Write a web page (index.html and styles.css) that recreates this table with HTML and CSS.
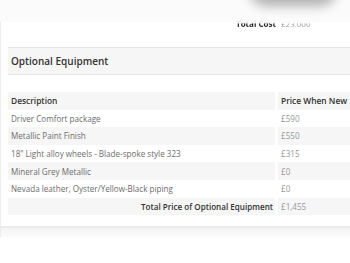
FILE: index.html
```html
<!DOCTYPE html>
<html>
<head>
<meta charset="utf-8">
<link rel="stylesheet" href="styles.css">
</head>
<body>
<div class="top">
  <div class="blob"></div>
  <div class="total-cost"><b>Total Cost</b> <span>£23,000</span></div>
</div>
<div class="card">
  <div class="section-head">Optional Equipment</div>
  <table class="equip">
    <thead>
      <tr><th class="desc">Description</th><th class="price">Price When New</th></tr>
    </thead>
    <tbody>
      <tr><td>Driver Comfort package</td><td class="p">£590</td></tr>
      <tr><td>Metallic Paint Finish</td><td class="p">£550</td></tr>
      <tr><td>18" Light alloy wheels - Blade-spoke style 323</td><td class="p">£315</td></tr>
      <tr><td>Mineral Grey Metallic</td><td class="p">£0</td></tr>
      <tr><td>Nevada leather, Oyster/Yellow-Black piping</td><td class="p">£0</td></tr>
      <tr class="total"><td class="tlabel">Total Price of Optional Equipment</td><td class="p">£1,455</td></tr>
    </tbody>
  </table>
  <div class="card-foot"></div>
</div>
</body>
</html>
```
FILE: styles.css
```css
html, body {
  margin: 0;
  padding: 0;
  background: #fff;
  overflow: hidden;
}
body {
  font-family: "Open Sans", "Liberation Sans", sans-serif;
  width: 350px;
  height: 263px;
}
.top {
  position: relative;
  height: 22px;
  background: #fbfbfb;
}
.blob {
  position: absolute;
  left: 250px;
  top: -34px;
  width: 86px;
  height: 34px;
  border-radius: 24px;
  box-shadow: 0 5px 12px 1px rgba(0,0,0,0.3);
}
.total-cost {
  position: absolute;
  left: 236px;
  top: 18px;
  font-size: 8px;
  line-height: 12px;
  color: #222;
  white-space: nowrap;
  -webkit-mask-image: linear-gradient(to bottom, rgba(0,0,0,0.08) 0%, rgba(0,0,0,0.08) 40%, #000 50%, #000 70%, rgba(0,0,0,0.08) 78%, rgba(0,0,0,0.08) 100%);
  mask-image: linear-gradient(to bottom, rgba(0,0,0,0.08) 0%, rgba(0,0,0,0.08) 40%, #000 50%, #000 70%, rgba(0,0,0,0.08) 78%, rgba(0,0,0,0.08) 100%);
}
.total-cost b { font-weight: 700; }
.total-cost span { color: #999; margin-left: 3px; }
.card {
  border-left: 1px solid #ececec;
  padding-top: 25px;
}
.section-head {
  margin-left: 7px;
  height: 26px;
  line-height: 26px;
  background: #f6f6f6;
  border-top: 1px solid #e4e4e4;
  border-bottom: 1px solid #e4e4e4;
  padding-left: 3px;
  font-size: 10px;
  font-weight: 600;
  color: #333;
}
.equip {
  margin-top: 17px;
  margin-left: 4px;
  border-collapse: separate;
  border-spacing: 3px 0;
  width: 360px;
  font-size: 8.1px;
  color: #6c6c6c;
}
.equip th, .equip td {
  height: 17.6px;
  padding: 0 0 0 3px;
  text-align: left;
  white-space: nowrap;
}
.equip th {
  background: #f6f6f6;
  font-weight: 600;
  font-size: 8.4px;
  color: #333;
}
.equip th.desc { width: 264px; }
.equip tbody tr:nth-child(even) td { background: #f6f6f6; }
.equip td.p { color: #999; }
.equip td.tlabel {
  text-align: right;
  font-weight: 600;
  color: #333;
  padding-right: 2px;
}
.card-foot {
  margin-top: 11px;
  height: 9px;
  border-top: 2px solid #ececec;
  background: linear-gradient(to bottom, #f4f4f4, #fcfcfc);
}
```
